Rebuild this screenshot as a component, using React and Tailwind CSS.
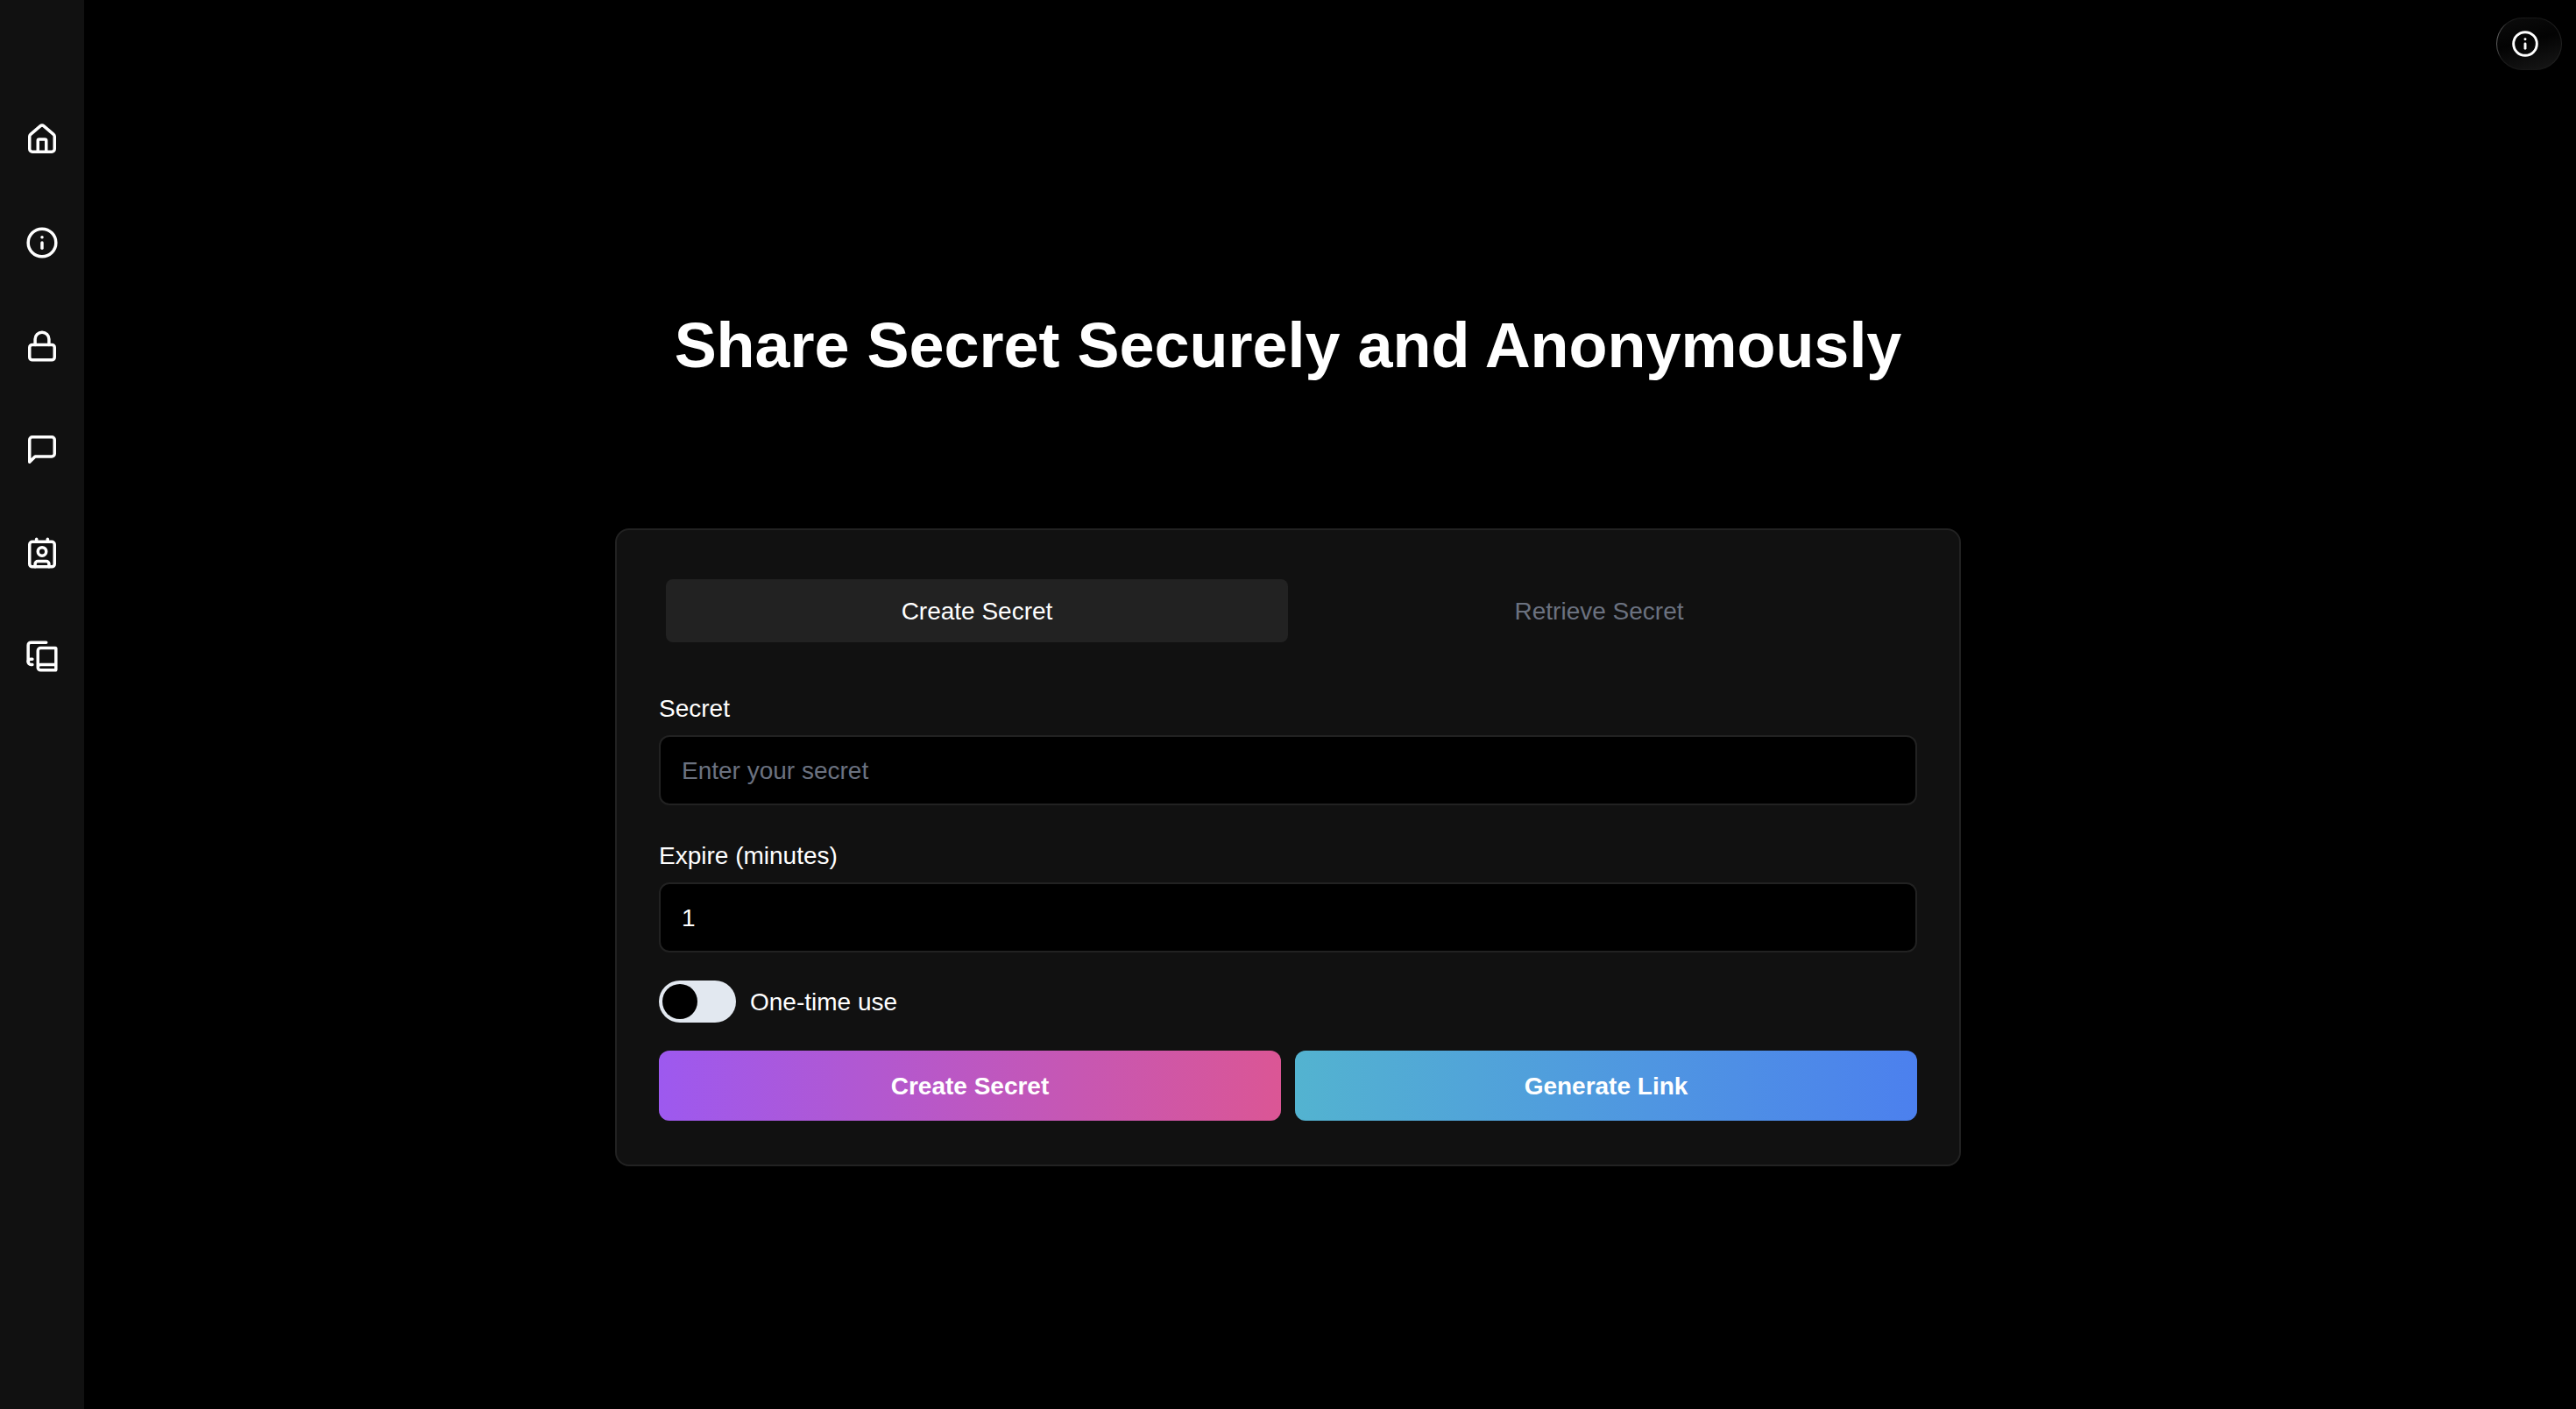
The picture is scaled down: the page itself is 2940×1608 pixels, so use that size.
import React, { useState } from "react";
import { Contact, House, Info, Lock } from "lucide-react";

const iconProps = {
  viewBox: "0 0 24 24",
  fill: "none",
  stroke: "currentColor",
  strokeLinecap: "round",
  strokeLinejoin: "round",
};

const ChatIcon = (props) => (
  <svg {...iconProps} {...props}>
    <path d="M21 15a2 2 0 0 1-2 2H7l-4 4V5a2 2 0 0 1 2-2h14a2 2 0 0 1 2 2z" />
  </svg>
);

const BookCopyIcon = (props) => (
  <svg {...iconProps} {...props}>
    <path d="M2 16V4a2 2 0 0 1 2-2h11" />
    <path d="M5 14H4a2 2 0 1 0 0 4h1" />
    <path d="M22 18H11a2 2 0 1 0 0 4h10.5a.5.5 0 0 0 .5-.5v-15a.5.5 0 0 0-.5-.5H11a2 2 0 0 0-2 2v12" />
  </svg>
);

const navItems = [
  { label: "Home", icon: House },
  { label: "About", icon: Info },
  { label: "Secret", icon: Lock },
  { label: "Chat", icon: ChatIcon },
  { label: "Contact", icon: Contact },
  { label: "Docs", icon: BookCopyIcon },
];

const Sidebar = () => (
  <aside className="flex w-24 shrink-0 flex-col items-center gap-20 bg-[#111111] pt-[140px]">
    {navItems.map(({ label, icon: Icon }) => (
      <a key={label} href="#" aria-label={label}>
        <Icon className="size-[38px]" strokeWidth={2.2} />
      </a>
    ))}
  </aside>
);

const Field = ({ id, label, ...props }) => (
  <div className="flex flex-col">
    <label htmlFor={id} className="text-[28px] leading-[28px]">
      {label}
    </label>
    <input
      id={id}
      className="mt-4 h-20 w-full rounded-xl border-2 border-[#222222] bg-black px-6 pt-0.5 text-[28px] text-white outline-none placeholder:text-[#6b7280]"
      {...props}
    />
  </div>
);

const App = () => {
  const [tab, setTab] = useState("create");
  const [secret, setSecret] = useState("");
  const [expire, setExpire] = useState("1");
  const [oneTime, setOneTime] = useState(false);

  const tabClass = (name) =>
    `h-[72px] flex-1 rounded-lg pt-0.5 ${tab === name ? "bg-[#222222] text-white" : "text-[#6b7280]"}`;

  return (
    <div className="flex h-[1608px] w-[2940px] overflow-hidden bg-black font-['Liberation_Sans',Arial,sans-serif] text-white">
      <Sidebar />

      <main className="relative flex flex-1 flex-col items-center pr-24">
        <h1 className="mt-[354px] text-[72px] leading-[80px] font-bold tracking-[-0.03px] whitespace-nowrap">
          Share Secret Securely and Anonymously
        </h1>

        <section className="mt-[169px] w-[1536px] rounded-2xl border-2 border-[#222222] bg-[#111111] px-12 pt-12 pb-[50px]">
          <div className="flex p-2 text-[28px]">
            <button className={tabClass("create")} onClick={() => setTab("create")}>
              Create Secret
            </button>
            <button className={tabClass("retrieve")} onClick={() => setTab("retrieve")}>
              Retrieve Secret
            </button>
          </div>

          <div className="mt-[54px] flex flex-col gap-11">
            <Field
              id="secret"
              label="Secret"
              placeholder="Enter your secret"
              value={secret}
              onChange={(e) => setSecret(e.target.value)}
            />
            <Field
              id="expire"
              label="Expire (minutes)"
              value={expire}
              onChange={(e) => setExpire(e.target.value)}
            />
          </div>

          <div className="mt-8 flex items-center gap-4">
            <button
              role="switch"
              aria-checked={oneTime}
              aria-label="One-time use"
              onClick={() => setOneTime(!oneTime)}
              className={`flex h-12 w-[88px] items-center rounded-full bg-[#e2e8f0] p-1 ${oneTime ? "justify-end" : "justify-start"}`}
            >
              <span className="size-10 rounded-full bg-black" />
            </button>
            <span className="pt-0.5 text-[28px] leading-[28px]">One-time use</span>
          </div>

          <div className="mt-8 flex gap-4 text-[28px] font-bold">
            <button className="h-20 flex-1 rounded-xl bg-linear-[to_right,#9d59ef,#db5695] pt-0.5">
              Create Secret
            </button>
            <button className="h-20 flex-1 rounded-xl bg-linear-[to_right,#53b3d0,#4c80ee] pt-0.5">
              Generate Link
            </button>
          </div>
        </section>

        {/* Floating info button, lit from its left edge */}
        <button
          aria-label="Info"
          className="absolute top-5 right-4 h-[60px] w-[75px] rounded-[30px] bg-linear-[100deg,#8a8a8a,#1c1c1c_16%,#161616_60%,#222222] p-px"
        >
          <span className="flex h-full w-full items-center rounded-[29px] bg-linear-[165deg,#0c0c0c,#030303_45%,#181818] pl-4">
            <Info className="size-8" strokeWidth={2.2} />
          </span>
        </button>
      </main>
    </div>
  );
};

export default App;
